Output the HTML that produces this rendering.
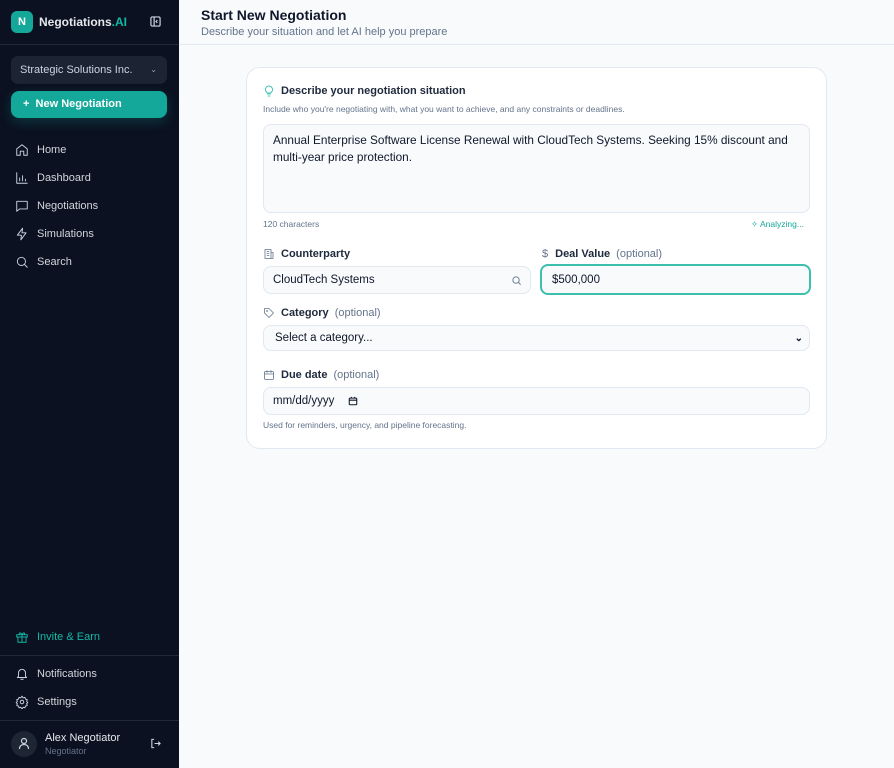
<!DOCTYPE html>
<html><head><meta charset="utf-8"><style>
*{box-sizing:border-box;margin:0;padding:0}
body{width:894px;height:768px;font-family:"Liberation Sans",sans-serif;background:#f8fafc;position:relative;overflow:hidden}
.sb{position:absolute;left:0;top:0;width:179px;height:768px;background:#0b1120;color:#cbd5e1}
.abs{position:absolute}
.nav{position:absolute;left:15px;font-size:11px;color:#d1d5db;display:flex;align-items:center}
.nav svg{width:14px;height:14px;margin-right:8px;stroke:#cbd5e1;fill:none;stroke-width:1.6;stroke-linecap:round;stroke-linejoin:round}
.hr{position:absolute;left:0;width:179px;height:1px;background:#1f2937}
.card{position:absolute;left:246px;top:67px;width:581px;height:382px;background:#fff;border:1px solid #e2e8f0;border-radius:14px}
.lbl{position:absolute;font-size:11px;font-weight:bold;color:#1e293b;display:flex;align-items:center}
.lbl svg{width:12px;height:12px;margin-right:6px;fill:none;stroke:#64748b;stroke-width:1.6;stroke-linecap:round;stroke-linejoin:round}
.opt{font-weight:normal;color:#64748b;margin-left:6px}
.inp{position:absolute;background:#f8fafc;border:1px solid #e2e8f0;border-radius:8px;font-size:11.5px;color:#0f172a;padding-left:9px;display:flex;align-items:center}
.sm{position:absolute;font-size:8.5px;color:#64748b}
</style></head><body>
<div class="sb">
 <div class="abs" style="left:11px;top:11px;width:22px;height:22px;border-radius:6px;background:#14a89a;color:#fff;font-size:11px;font-weight:bold;text-align:center;line-height:22px">N</div>
 <div class="abs" style="left:39px;top:15px;font-size:12px;font-weight:bold;color:#e5e7eb">Negotiations<span style="color:#14b8a6">.AI</span></div>
 <svg class="abs" style="left:150px;top:16px" width="11" height="11" viewBox="0 0 12 12" fill="none" stroke="#cbd5e1" stroke-width="1.3"><rect x="1" y="1" width="10" height="10" rx="1.5"/><path d="M4.5 1v10M8 4.5L6.5 6 8 7.5"/></svg>
 <div class="hr" style="top:44px"></div>
 <div class="abs" style="left:11px;top:56px;width:156px;height:28px;background:#1c2333;border-radius:7px;font-size:11px;color:#cbd5e1;padding-left:9px;line-height:28px">Strategic Solutions Inc.<span style="position:absolute;right:10px;font-size:8px;color:#94a3b8">⌄</span></div>
 <div class="abs" style="left:11px;top:91px;width:156px;height:27px;background:#14a89a;border-radius:8px;font-size:11px;font-weight:bold;color:#fff;padding-left:12px;line-height:27px;box-shadow:0 4px 12px rgba(20,168,154,.25)">+&nbsp; New Negotiation</div>
 <div class="nav" style="top:143px"><svg viewBox="0 0 24 24"><path d="M3 10l9-7 9 7v11H15v-7H9v7H3z"/></svg>Home</div>
 <div class="nav" style="top:171px"><svg viewBox="0 0 24 24"><path d="M3 3v18h18M8 17v-5M13 17V8M18 17v-3"/></svg>Dashboard</div>
 <div class="nav" style="top:199px"><svg viewBox="0 0 24 24"><path d="M3 4h18v13H8l-5 4z"/></svg>Negotiations</div>
 <div class="nav" style="top:227px"><svg viewBox="0 0 24 24"><path d="M13 2L4 14h7l-1 8 9-12h-7z"/></svg>Simulations</div>
 <div class="nav" style="top:255px"><svg viewBox="0 0 24 24"><circle cx="11" cy="11" r="7"/><path d="M21 21l-5-5"/></svg>Search</div>
 <div class="nav" style="top:630px;color:#14b8a6"><svg viewBox="0 0 24 24" style="stroke:#14b8a6"><rect x="3" y="8" width="18" height="4"/><path d="M5 12v9h14v-9M12 8v13M12 8C9 3 6 5 8 8M12 8c3-5 6-3 4 0"/></svg>Invite &amp; Earn</div>
 <div class="hr" style="top:655px"></div>
 <div class="nav" style="top:667px"><svg viewBox="0 0 24 24"><path d="M6 16V10a6 6 0 0112 0v6l2 2H4zM10 21h4"/></svg>Notifications</div>
 <div class="nav" style="top:695px"><svg viewBox="0 0 24 24"><circle cx="12" cy="12" r="3"/><path d="M12 2l2 3 3-1 1 3 3 1-1 3 2 2-2 2 1 3-3 1-1 3-3-1-2 3-2-3-3 1-1-3-3-1 1-3-2-2 2-2-1-3 3-1 1-3 3 1z"/></svg>Settings</div>
 <div class="hr" style="top:720px"></div>
 <div class="abs" style="left:11px;top:731px;width:26px;height:26px;border-radius:50%;background:#1e2533"></div>
 <svg class="abs" style="left:18px;top:737px" width="12" height="13" viewBox="0 0 12 13" fill="none" stroke="#cbd5e1" stroke-width="1.2"><circle cx="6" cy="4" r="2.5"/><path d="M1.5 12c0-3 2-4.5 4.5-4.5s4.5 1.5 4.5 4.5"/></svg>
 <div class="abs" style="left:45px;top:732px;font-size:11px;color:#e5e7eb">Alex Negotiator</div>
 <div class="abs" style="left:45px;top:746px;font-size:9px;color:#64748b">Negotiator</div>
 <svg class="abs" style="left:150px;top:738px" width="11" height="11" viewBox="0 0 12 12" fill="none" stroke="#cbd5e1" stroke-width="1.2"><path d="M4.5 1.5H2v9h2.5M5 6h6M9 4l2 2-2 2"/></svg>
</div>
<div class="abs" style="left:179px;top:0;width:715px;height:45px;border-bottom:1px solid #e2e8f0;background:#f8fafc"></div>
<div class="abs" style="left:201px;top:7px;font-size:14px;font-weight:bold;color:#0f172a">Start New Negotiation</div>
<div class="abs" style="left:201px;top:26px;font-size:11px;color:#64748b">Describe your situation and let AI help you prepare</div>
<div class="card"></div>
<div class="lbl" style="left:263px;top:85px"><svg viewBox="0 0 24 24" style="stroke:#14b8a6"><path d="M9 18h6M10 22h4M12 2a7 7 0 00-4 12.7V16h8v-1.3A7 7 0 0012 2z"/></svg>Describe your negotiation situation</div>
<div class="sm" style="left:263px;top:104px">Include who you're negotiating with, what you want to achieve, and any constraints or deadlines.</div>
<div class="inp" style="left:263px;top:124px;width:547px;height:89px;align-items:flex-start;padding-top:7px;line-height:17px;font-size:11.8px">Annual Enterprise Software License Renewal with CloudTech Systems. Seeking 15% discount and multi-year price protection.</div>
<div class="sm" style="left:263px;top:219px">120 characters</div>
<div class="sm" style="left:751px;top:219px;color:#14a89a">✧ Analyzing...</div>
<div class="lbl" style="left:263px;top:248px"><svg viewBox="0 0 24 24"><rect x="4" y="3" width="12" height="18"/><path d="M16 9h4v12h-4M8 7h4M8 11h4M8 15h4"/></svg>Counterparty</div>
<div class="inp" style="left:263px;top:266px;width:268px;height:28px">CloudTech Systems<svg style="position:absolute;right:8px;top:8px" width="11" height="11" viewBox="0 0 24 24" fill="none" stroke="#64748b" stroke-width="2"><circle cx="11" cy="11" r="7"/><path d="M21 21l-5-5"/></svg></div>
<div class="lbl" style="left:542px;top:248px"><span style="color:#64748b;font-weight:normal;margin-right:7px">$</span>Deal Value<span class="opt">(optional)</span></div>
<div class="inp" style="left:540px;top:264px;width:271px;height:31px;border:2px solid #3dbfae;padding-left:10px">$500,000</div>
<div class="lbl" style="left:263px;top:307px"><svg viewBox="0 0 24 24"><path d="M3 3h9l9 9-9 9-9-9z"/><circle cx="8" cy="8" r="1"/></svg>Category<span class="opt">(optional)</span></div>
<div class="inp" style="left:263px;top:325px;width:547px;height:26px;padding-left:11px">Select a category...<span style="position:absolute;right:6px;font-size:10px;font-weight:bold">⌄</span></div>
<div class="lbl" style="left:263px;top:369px"><svg viewBox="0 0 24 24"><rect x="3" y="5" width="18" height="16" rx="2"/><path d="M3 10h18M8 3v4M16 3v4"/></svg>Due date<span class="opt">(optional)</span></div>
<div class="inp" style="left:263px;top:387px;width:547px;height:28px">mm/dd/yyyy<svg style="margin-left:14px" width="10" height="10" viewBox="0 0 24 24" fill="none" stroke="#0f172a" stroke-width="2.5"><rect x="3" y="5" width="18" height="16" rx="2"/><path d="M3 10h18M8 2v4M16 2v4"/></svg></div>
<div class="sm" style="left:263px;top:420px">Used for reminders, urgency, and pipeline forecasting.</div>
</body></html>
